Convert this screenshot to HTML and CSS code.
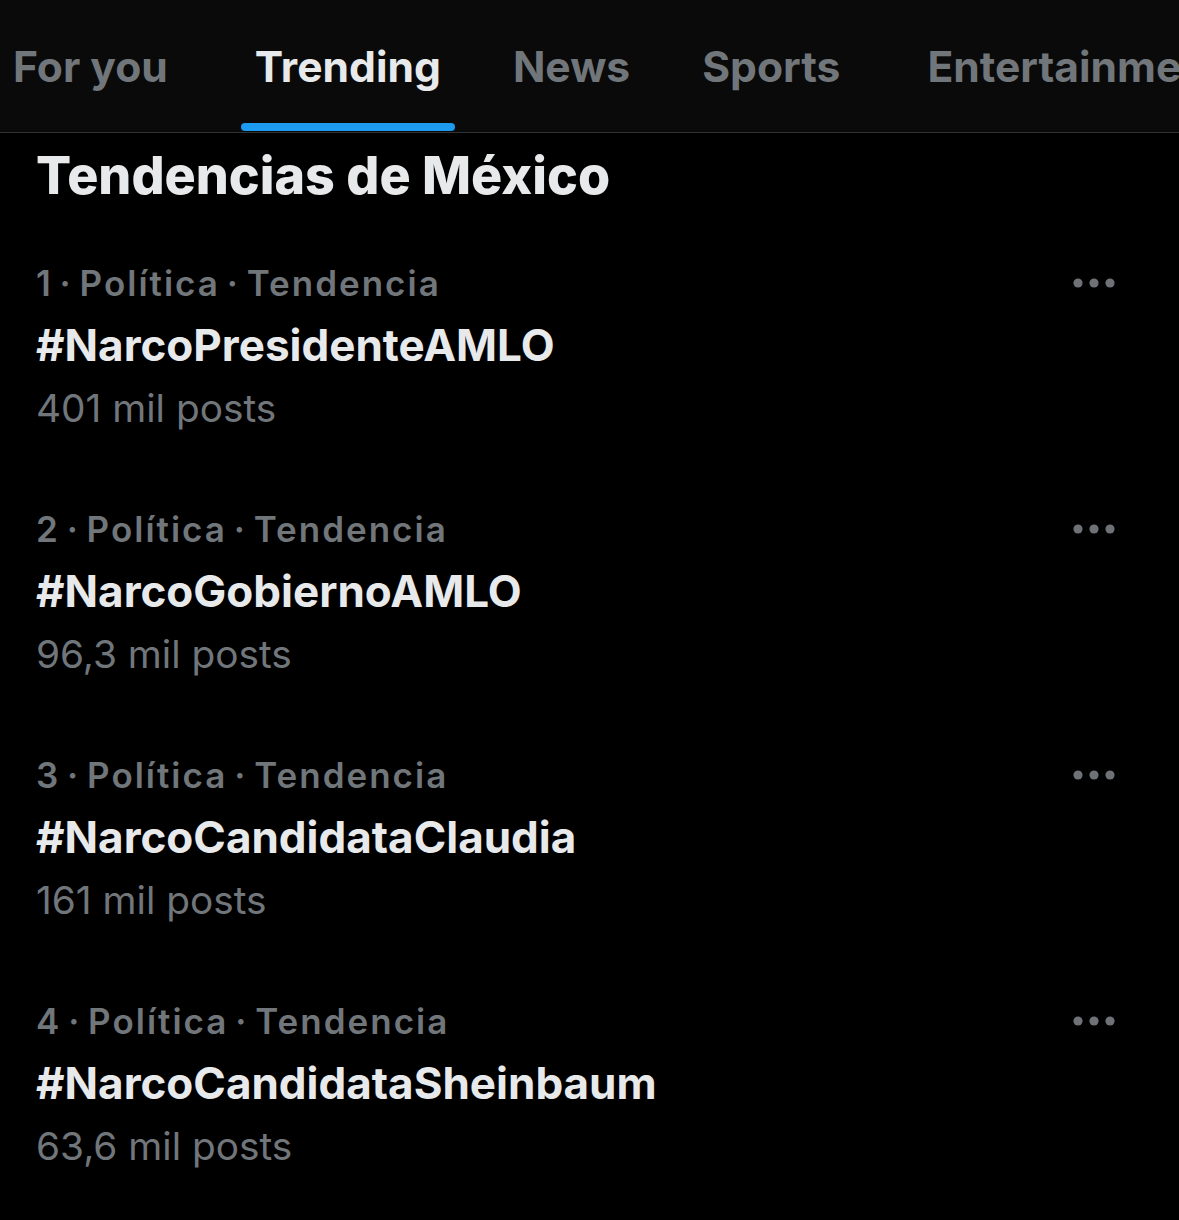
FILE: index.html
```html
<!DOCTYPE html>
<html lang="es">
<head>
<meta charset="utf-8">
<title>Tendencias de México</title>
<link rel="stylesheet" href="styles.css">
</head>
<body>
<header class="tabs">
  <a class="tab">For you</a>
  <a class="tab tab-active tab-wide"><span class="tab-label">Trending</span></a>
  <a class="tab">News</a>
  <a class="tab">Sports</a>
  <a class="tab tab-wide">Entertainment</a>
</header>
<main class="content">
  <h1 class="title">Tendencias de México</h1>
  <section class="trend">
    <div class="trend-meta-row">
      <span class="trend-meta">1 · Política · Tendencia</span>
      <svg class="more" viewBox="0 0 42 10" aria-hidden="true"><circle cx="5" cy="5" r="4.6"/><circle cx="21" cy="5" r="4.6"/><circle cx="37" cy="5" r="4.6"/></svg>
    </div>
    <div class="trend-name">#NarcoPresidenteAMLO</div>
    <div class="trend-count">401 mil posts</div>
  </section>
  <section class="trend">
    <div class="trend-meta-row">
      <span class="trend-meta">2 · Política · Tendencia</span>
      <svg class="more" viewBox="0 0 42 10" aria-hidden="true"><circle cx="5" cy="5" r="4.6"/><circle cx="21" cy="5" r="4.6"/><circle cx="37" cy="5" r="4.6"/></svg>
    </div>
    <div class="trend-name">#NarcoGobiernoAMLO</div>
    <div class="trend-count">96,3 mil posts</div>
  </section>
  <section class="trend">
    <div class="trend-meta-row">
      <span class="trend-meta">3 · Política · Tendencia</span>
      <svg class="more" viewBox="0 0 42 10" aria-hidden="true"><circle cx="5" cy="5" r="4.6"/><circle cx="21" cy="5" r="4.6"/><circle cx="37" cy="5" r="4.6"/></svg>
    </div>
    <div class="trend-name">#NarcoCandidataClaudia</div>
    <div class="trend-count">161 mil posts</div>
  </section>
  <section class="trend">
    <div class="trend-meta-row">
      <span class="trend-meta">4 · Política · Tendencia</span>
      <svg class="more" viewBox="0 0 42 10" aria-hidden="true"><circle cx="5" cy="5" r="4.6"/><circle cx="21" cy="5" r="4.6"/><circle cx="37" cy="5" r="4.6"/></svg>
    </div>
    <div class="trend-name">#NarcoCandidataSheinbaum</div>
    <div class="trend-count">63,6 mil posts</div>
  </section>
</main>
</body>
</html>
```
FILE: styles.css
```css
html {
  background: #000;
}
body {
  margin: 0;
  background: #000;
  font-family: Inter, "Noto Sans", sans-serif;
  color: #e7e9ea;
  overflow: hidden;
}

/* ---------- tabs ---------- */
.tabs {
  display: flex;
  gap: 72px;
  height: 132px;
  padding-left: 13px;
  background: #0a0a0a;
  border-bottom: 1px solid #2f3336;
  white-space: nowrap;
  overflow: hidden;
}
.tab {
  flex: none;
  padding-top: 39px;
  font-size: 42.6px;
  font-weight: 700;
  line-height: 56px;
  color: #71767b;
}
.tab-wide {
  margin-left: 15px;
}
.tab-active {
  color: #e7e9ea;
}
.tab-label {
  position: relative;
  display: inline-block;
}
.tab-label::after {
  content: "";
  position: absolute;
  left: -14px;
  right: -14px;
  top: 84px;
  height: 8px;
  border-radius: 4px;
  background: #1d9bf0;
}

/* ---------- content ---------- */
.content {
  padding: 0 64px 0 36px;
}
.title {
  margin: 11px 0 15px;
  font-size: 52px;
  font-weight: 800;
  line-height: 64px;
  color: #e7e9ea;
}
.trend {
  padding: 29px 0;
}
.trend-meta-row {
  display: flex;
  align-items: center;
  justify-content: space-between;
  height: 62px;
}
.trend-meta {
  font-size: 35px;
  font-weight: 600;
  letter-spacing: 2px;
  word-spacing: -4px;
  line-height: 62px;
  color: #71767b;
}
.more {
  width: 42px;
  height: 10px;
  fill: #6e7176;
}
.trend-name {
  font-size: 44px;
  font-weight: 700;
  line-height: 62px;
  color: #e7e9ea;
}
.trend-count {
  font-size: 38.8px;
  font-weight: 400;
  line-height: 64px;
  color: #71767b;
}
```
